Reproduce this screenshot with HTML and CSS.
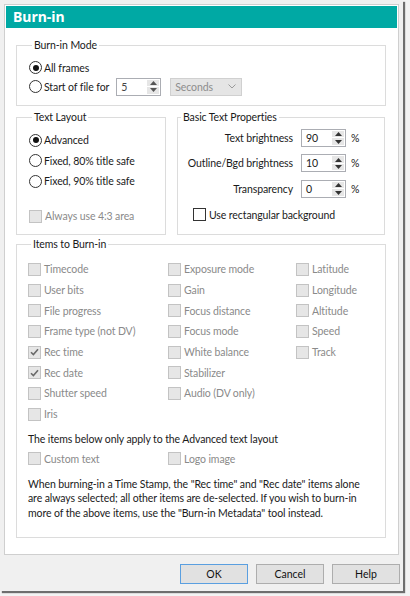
FILE: index.html
```html
<!DOCTYPE html>
<html>
<head>
<meta charset="utf-8">
<link rel="stylesheet" href="styles.css">
</head>
<body>
<div class="frame">
  <div class="panel">
    <div class="header">Burn-in</div>
    <div class="content">
      <fieldset class="group mode">
        <legend>Burn-in Mode</legend>
        <div class="opt"><span class="radio on"></span>All frames</div>
        <div class="opt"><span class="radio"></span>Start of file for
          <span class="spin sp-mode"><span class="val">5</span><span class="arrows"><span class="up"><svg width="7" height="4" viewBox="0 0 7 4"><path d="M0 4L3.5 0L7 4Z" fill="#555"/></svg></span><span class="dn"><svg width="7" height="4" viewBox="0 0 7 4"><path d="M0 0L3.5 4L7 0Z" fill="#555"/></svg></span></span></span>
          <span class="combo">Seconds<svg class="chev" width="8" height="5" viewBox="0 0 8 5"><path d="M0.5 0.5L4 4L7.5 0.5" fill="none" stroke="#9a9a9a" stroke-width="1"/></svg></span>
        </div>
      </fieldset>

      <div class="row2">
        <fieldset class="group layout">
          <legend>Text Layout</legend>
          <div class="opt r"><span class="radio on"></span>Advanced</div>
          <div class="opt r"><span class="radio"></span>Fixed, 80% title safe</div>
          <div class="opt r"><span class="radio"></span>Fixed, 90% title safe</div>
          <div class="opt cbrow dis"><span class="cb"></span>Always use 4:3 area</div>
        </fieldset>
        <fieldset class="group basic">
          <legend>Basic Text Properties</legend>
          <div class="prop"><span class="plabel">Text brightness</span><span class="spin"><span class="val">90</span><span class="arrows"><span class="up"><svg width="7" height="4" viewBox="0 0 7 4"><path d="M0 4L3.5 0L7 4Z" fill="#333"/></svg></span><span class="dn"><svg width="7" height="4" viewBox="0 0 7 4"><path d="M0 0L3.5 4L7 0Z" fill="#333"/></svg></span></span></span><span class="pct">%</span></div>
          <div class="prop"><span class="plabel">Outline/Bgd brightness</span><span class="spin"><span class="val">10</span><span class="arrows"><span class="up"><svg width="7" height="4" viewBox="0 0 7 4"><path d="M0 4L3.5 0L7 4Z" fill="#333"/></svg></span><span class="dn"><svg width="7" height="4" viewBox="0 0 7 4"><path d="M0 0L3.5 4L7 0Z" fill="#333"/></svg></span></span></span><span class="pct">%</span></div>
          <div class="prop"><span class="plabel">Transparency</span><span class="spin"><span class="val">0</span><span class="arrows"><span class="up"><svg width="7" height="4" viewBox="0 0 7 4"><path d="M0 4L3.5 0L7 4Z" fill="#333"/></svg></span><span class="dn"><svg width="7" height="4" viewBox="0 0 7 4"><path d="M0 0L3.5 4L7 0Z" fill="#333"/></svg></span></span></span><span class="pct">%</span></div>
          <div class="opt cbrow rect"><span class="cb en"></span>Use rectangular background</div>
        </fieldset>
      </div>

      <fieldset class="group items">
        <legend>Items to Burn-in</legend>
        <div class="grid">
          <div class="it"><span class="cb"></span>Timecode</div>
          <div class="it"><span class="cb"></span>Exposure mode</div>
          <div class="it"><span class="cb"></span>Latitude</div>
          <div class="it"><span class="cb"></span>User bits</div>
          <div class="it"><span class="cb"></span>Gain</div>
          <div class="it"><span class="cb"></span>Longitude</div>
          <div class="it"><span class="cb"></span>File progress</div>
          <div class="it"><span class="cb"></span>Focus distance</div>
          <div class="it"><span class="cb"></span>Altitude</div>
          <div class="it"><span class="cb"></span>Frame type (not DV)</div>
          <div class="it"><span class="cb"></span>Focus mode</div>
          <div class="it"><span class="cb"></span>Speed</div>
          <div class="it"><span class="cb chk"><svg width="9" height="8" viewBox="0 0 9 8"><path d="M1 4.2L3.4 6.6L8 1.2" fill="none" stroke="#6a6a6a" stroke-width="1.6"/></svg></span>Rec time</div>
          <div class="it"><span class="cb"></span>White balance</div>
          <div class="it"><span class="cb"></span>Track</div>
          <div class="it"><span class="cb chk"><svg width="9" height="8" viewBox="0 0 9 8"><path d="M1 4.2L3.4 6.6L8 1.2" fill="none" stroke="#6a6a6a" stroke-width="1.6"/></svg></span>Rec date</div>
          <div class="it"><span class="cb"></span>Stabilizer</div>
          <div class="it"></div>
          <div class="it"><span class="cb"></span>Shutter speed</div>
          <div class="it"><span class="cb"></span>Audio (DV only)</div>
          <div class="it"></div>
          <div class="it"><span class="cb"></span>Iris</div>
        </div>
        <p class="note">The items below only apply to the Advanced text layout</p>
        <div class="grid two">
          <div class="it"><span class="cb"></span>Custom text</div>
          <div class="it"><span class="cb"></span>Logo image</div>
        </div>
        <p class="para">When burning-in a Time Stamp, the "Rec time" and "Rec date" items alone are always selected; all other items are de-selected. If you wish to burn-in more of the above items, use the "Burn-in Metadata" tool instead.</p>
      </fieldset>
    </div>
  </div>
  <div class="buttons">
    <button class="btn def">OK</button>
    <button class="btn">Cancel</button>
    <button class="btn">Help</button>
  </div>
</div>
</body>
</html>
```

FILE: styles.css
```css
* { box-sizing: border-box; }
html, body { margin: 0; padding: 0; }
body {
  width: 410px;
  height: 596px;
  background: #f3f3f3;
  font-family: Lato, "Noto Sans", "Liberation Sans", sans-serif;
  font-size: 10.5px;
  letter-spacing: -0.1px;
  color: #1a1a1a;
  overflow: hidden;
}
.frame {
  width: 403px;
  height: 591px;
  background: #f0f0f0;
  box-shadow: 2px 2px 1px rgba(0,0,0,0.55);
  padding: 4px 0 0 4px;
}
.panel {
  width: 395px;
  height: 551px;
  background: #fff;
  border: 1px solid #cfcfcf;
}
.header {
  margin: 1px;
  height: 22px;
  background: #00a9a4;
  color: #fff;
  font-family: "Noto Sans", "Liberation Sans", sans-serif;
  font-weight: bold;
  font-size: 14px;
  letter-spacing: 0;
  line-height: 22px;
  padding-left: 7px;
}
.content {
  padding: 9px 12px 0 11px;
}
.group {
  margin: 0;
  border: 1px solid #dcdcdc;
  padding: 0;
  min-width: 0;
}
.group legend {
  padding: 0 2px;
  margin-left: 3px;
  line-height: 14px;
  color: #1a1a1a;
}
.opt {
  display: flex;
  align-items: center;
  height: 19px;
  white-space: nowrap;
}
.radio {
  width: 13px;
  height: 13px;
  border: 1px solid #333;
  border-radius: 50%;
  background: #fff;
  margin-right: 2px;
  display: flex;
  align-items: center;
  justify-content: center;
  flex: none;
}
.radio.on::after {
  content: "";
  width: 6px;
  height: 6px;
  border-radius: 50%;
  background: #111;
}
.mode { padding: 6px 0 9px 12px; }
.spin {
  display: flex;
  width: 45px;
  height: 18px;
  border: 1px solid #abadb3;
  background: #fff;
  flex: none;
}
.sp-mode { margin-left: 7px; }
.spin .val {
  flex: 1;
  padding-left: 4px;
  line-height: 16px;
}
.spin .arrows {
  width: 13px;
  display: flex;
  flex-direction: column;
  padding: 1px 1px 1px 0;
}
.arrows .up, .arrows .dn {
  flex: 1;
  background: #e6e6e6;
  display: flex;
  align-items: center;
  justify-content: center;
}
.arrows .up { border-bottom: 1px solid #fff; }
.mode .spin .val { color: #444; }
.combo {
  margin-left: 9px;
  width: 72px;
  height: 18px;
  background: #e5e5e5;
  border: 1px solid #d0d0d0;
  color: #8d8d8d;
  display: flex;
  align-items: center;
  padding-left: 4px;
}
.combo .chev { margin-left: auto; margin-right: 5px; }

.row2 {
  display: flex;
  gap: 11px;
  margin-top: 4px;
}
.layout {
  width: 150px;
  height: 125px;
  padding: 6px 0 0 12px;
}
.layout .opt.r { height: 20.5px; }
.cbrow { margin-top: 14.5px; height: 20px; }
.cb {
  width: 13px;
  height: 13px;
  border: 1px solid #c3c3c3;
  background: #e6e6e6;
  margin-right: 3px;
  flex: none;
  display: flex;
  align-items: center;
  justify-content: center;
}
.cb.en {
  border-color: #333;
  background: #fff;
}
.dis, .it { color: #8a8a8a; }

.basic {
  width: 208px;
  height: 125px;
  padding: 1px 0 0 0;
}
.prop {
  display: flex;
  align-items: center;
  height: 25.5px;
}
.plabel {
  width: 115px;
  text-align: right;
  margin-right: 8px;
  white-space: nowrap;
}
.pct { margin-left: 5px; }
.basic .rect { margin-top: 3px; padding-left: 15px; }
.basic .rect .cb { margin-right: 3px; }

.items {
  margin-top: 2px;
  height: 301px;
  padding: 8px 0 0 11px;
}
.grid {
  display: grid;
  grid-template-columns: 140px 128px 1fr;
}
.grid.two { grid-template-columns: 140px 1fr; margin-top: 3px; }
.it {
  display: flex;
  align-items: center;
  height: 20.7px;
  white-space: nowrap;
}
.grid.two .it { height: 20px; }
.note {
  margin: 7px 0 0 0;
  line-height: 14px;
}
.para {
  margin: 8px 13px 0 0;
  line-height: 14.5px;
}
.buttons {
  display: flex;
  justify-content: flex-end;
  gap: 8px;
  margin-top: 9px;
  padding-right: 3px;
}
.btn {
  width: 68px;
  height: 20px;
  background: #e1e1e1;
  border: 1px solid #adadad;
  font-family: Lato, "Noto Sans", "Liberation Sans", sans-serif;
  font-size: 10.5px;
  color: #111;
  padding: 0;
  margin: 0;
}
.btn.def { border-color: #5a9fe0; }
```
